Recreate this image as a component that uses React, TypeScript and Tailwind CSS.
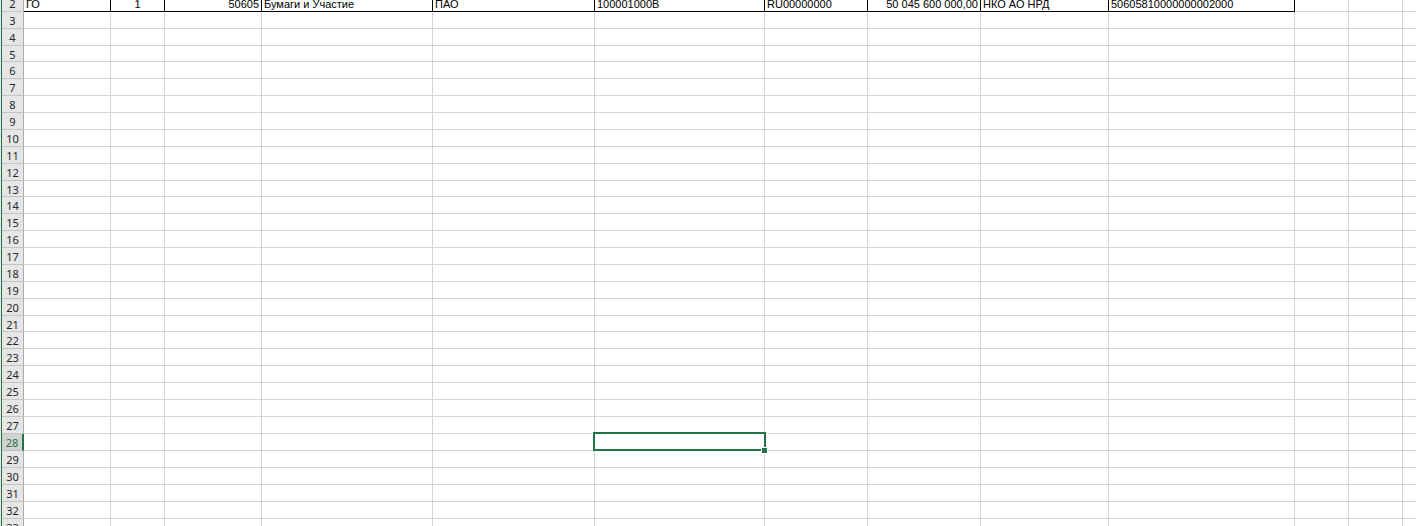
import React from "react";

const COLS = [87, 54, 97, 171, 162, 170, 103, 113, 128, 186, 54, 54, 54];
const COL_CLASSES = [
  "w-[87px]",
  "w-[54px]",
  "w-[97px]",
  "w-[171px]",
  "w-[162px]",
  "w-[170px]",
  "w-[103px]",
  "w-[113px]",
  "w-[128px]",
  "w-[186px]",
  "w-[54px]",
  "w-[54px]",
  "w-[54px]",
];

type Align = "l" | "c" | "r";
const DATA: { t: string; a: Align }[] = [
  { t: "ГО", a: "l" },
  { t: "1", a: "c" },
  { t: "50605", a: "r" },
  { t: "Бумаги и Участие", a: "l" },
  { t: "ПАО", a: "l" },
  { t: "100001000В", a: "l" },
  { t: "RU00000000", a: "l" },
  { t: "50 045 600 000,00", a: "r" },
  { t: "НКО АО НРД", a: "l" },
  { t: "50605810000000002000", a: "l" },
];

const SHORT_ROWS = new Set([5, 13, 21]);

function RowHeader({ n, selected }: { n: number; selected?: boolean }) {
  return (
    <div
      className={
        "w-[22px] shrink-0 flex items-center justify-center border-b text-[11px] leading-none font-['Noto_Sans','Open_Sans',sans-serif] " +
        (selected
          ? "bg-[#d2d2d2] text-[#217346] border-b-[#bcbcbc] border-r-2 border-r-[#217346]"
          : "bg-[#e6e6e6] text-[#262626] border-b-[#c4c4c4] border-r border-r-[#ababab]")
      }
    >
      <span className="pt-px">{n}</span>
    </div>
  );
}

function Row({ n }: { n: number }) {
  const h = SHORT_ROWS.has(n) ? "h-[16px]" : "h-[17px]";
  const isData = n === 2;
  return (
    <div className={"flex shrink-0 " + h}>
      <RowHeader n={n} selected={n === 28} />
      {COLS.map((_, i) => {
        const d = isData ? DATA[i] : undefined;
        const black = isData && i < 10;
        const align = d
          ? d.a === "r"
            ? "justify-end"
            : d.a === "c"
            ? "justify-center"
            : "justify-start"
          : "";
        return (
          <div
            key={i}
            className={
              COL_CLASSES[i] +
              " shrink-0 flex items-end overflow-hidden whitespace-nowrap px-[2px] pb-[1px] text-[11px] leading-none text-black font-['Liberation_Sans',Arial,sans-serif] border-r border-b " +
              (black ? "border-black " : "border-[#d4d4d4] ") +
              align
            }
          >
            {d ? <span>{d.t}</span> : null}
          </div>
        );
      })}
    </div>
  );
}

export default function App() {
  const rows: number[] = [];
  for (let i = 2; i <= 33; i++) rows.push(i);
  return (
    <div className="relative w-[1416px] h-[526px] overflow-hidden bg-white flex">
      <div className="w-px shrink-0 bg-[#e9e9e9]" />
      <div className="w-px shrink-0 bg-[#217346]" />
      <div className="flex flex-col -mt-[5px]">
        {rows.map((n) => (
          <Row key={n} n={n} />
        ))}
      </div>
      {/* selection */}
      <div className="absolute left-[593px] top-[432px] w-[173px] h-[19px] border-2 border-[#217346] pointer-events-none" />
      <div className="absolute left-[761px] top-[447px] w-[7px] h-[7px] bg-white" />
      <div className="absolute left-[762px] top-[448px] w-[5px] h-[5px] bg-[#217346]" />
    </div>
  );
}
